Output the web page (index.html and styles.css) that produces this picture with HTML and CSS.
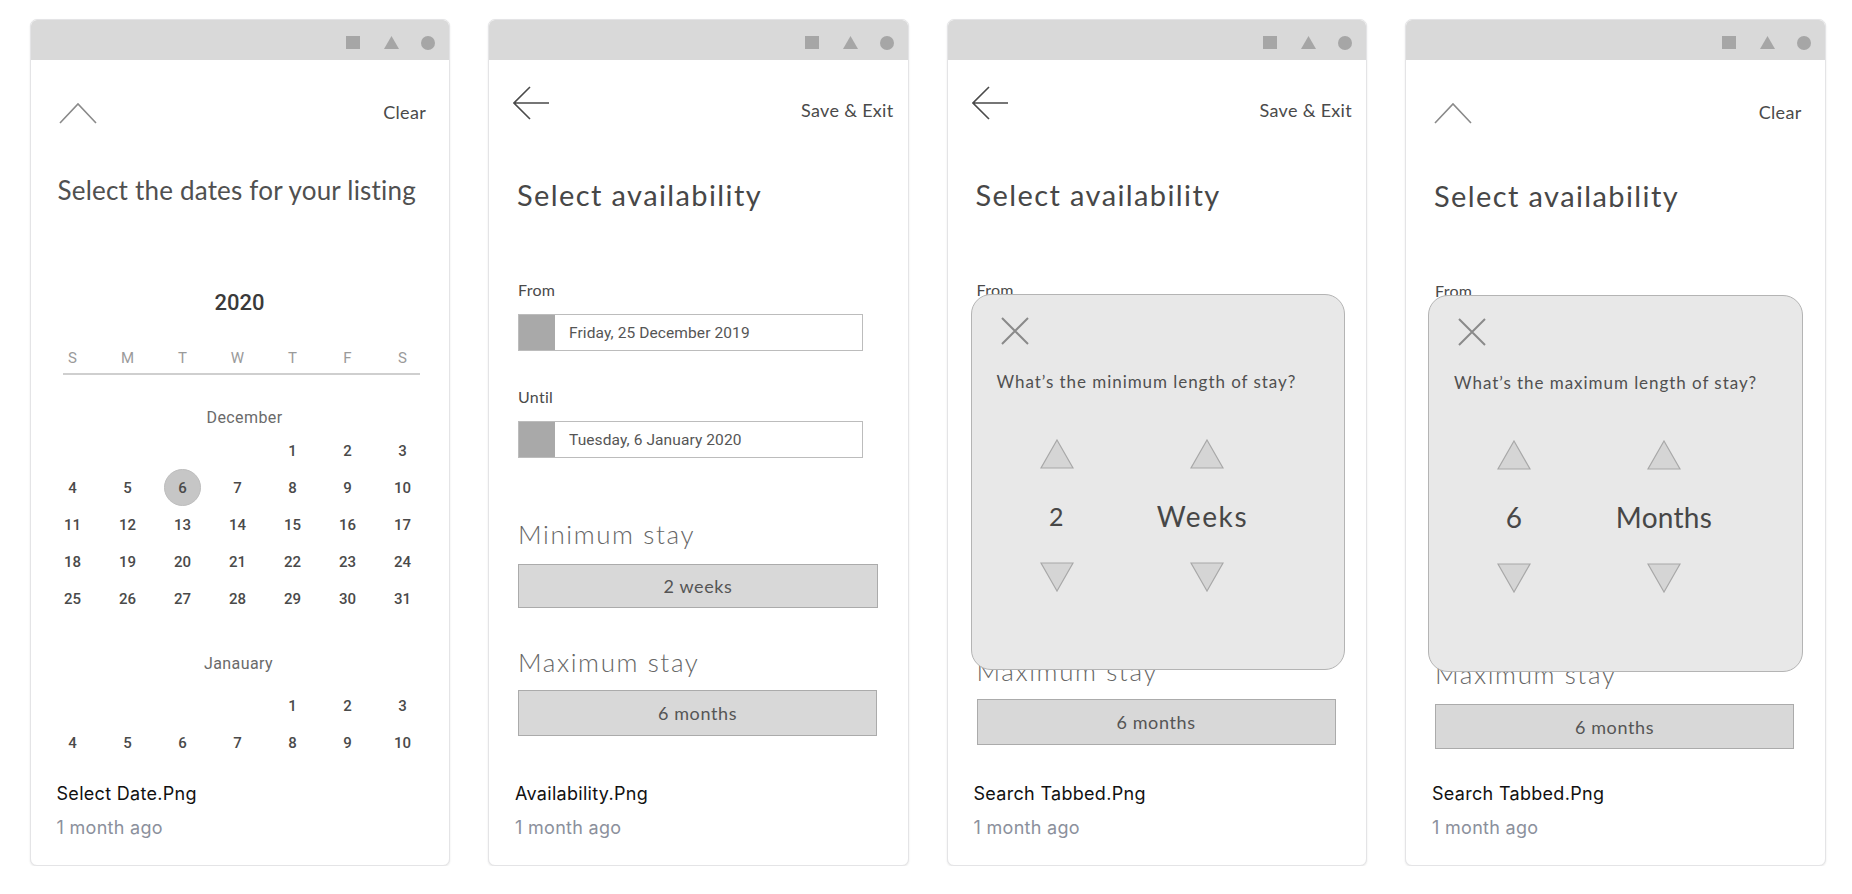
FILE: index.html
```html
<!DOCTYPE html>
<html lang="en">
<head>
<meta charset="utf-8">
<title>Files</title>
<link rel="stylesheet" href="styles.css">
</head>
<body>
<div class="grid">

  <div class="card">
    <div class="shot">
      <div class="chrome">
        <span class="ic-sq"></span>
        <svg class="ic-tri" width="15" height="13" viewBox="0 0 15 13"><polygon points="7.5,0 15,13 0,13" fill="#a6a6a6"/></svg>
        <span class="ic-dot"></span>
      </div>
      <div class="screen">
        <div class="topbar topbar-chev">
          <svg class="chev" width="38" height="22" viewBox="0 0 38 22"><polyline points="1,21 19,2 37,21" fill="none" stroke="#8a8a8a" stroke-width="1.6"/></svg>
          <span class="toplink toplink-clear">Clear</span>
        </div>
        <h1 class="title-dates">Select the dates for your listing</h1>
        <div class="cal">
          <div class="year">2020</div>
          <div class="dow"><span>S</span><span>M</span><span>T</span><span>W</span><span>T</span><span>F</span><span>S</span></div>
          <div class="dow-line"></div>
          <div class="month month-dec">December</div>
          <div class="days">
            <span></span><span></span><span></span><span></span><span>1</span><span>2</span><span>3</span>
            <span>4</span><span>5</span><span class="sel">6</span><span>7</span><span>8</span><span>9</span><span>10</span>
            <span>11</span><span>12</span><span>13</span><span>14</span><span>15</span><span>16</span><span>17</span>
            <span>18</span><span>19</span><span>20</span><span>21</span><span>22</span><span>23</span><span>24</span>
            <span>25</span><span>26</span><span>27</span><span>28</span><span>29</span><span>30</span><span>31</span>
          </div>
          <div class="month month-jan">Janauary</div>
          <div class="days days-jan">
            <span></span><span></span><span></span><span></span><span>1</span><span>2</span><span>3</span>
            <span>4</span><span>5</span><span>6</span><span>7</span><span>8</span><span>9</span><span>10</span>
          </div>
        </div>
      </div>
    </div>
    <div class="meta">
      <div class="name">Select Date.Png</div>
      <div class="time">1 month ago</div>
    </div>
  </div>

  <div class="card">
    <div class="shot">
      <div class="chrome">
        <span class="ic-sq"></span>
        <svg class="ic-tri" width="15" height="13" viewBox="0 0 15 13"><polygon points="7.5,0 15,13 0,13" fill="#a6a6a6"/></svg>
        <span class="ic-dot"></span>
      </div>
      <div class="screen">
        <div class="topbar topbar-back">
          <svg class="back" width="36" height="34" viewBox="0 0 36 34"><path d="M36 17H1M17 1L1 17L17 33" fill="none" stroke="#4a4a4a" stroke-width="1.6"/></svg>
          <span class="toplink toplink-low">Save &amp; Exit</span>
        </div>
        <h1 class="title-avail">Select availability</h1>
        <div class="label label-from">From</div>
        <div class="datebox"><span class="datebox-sq"></span><span class="datebox-text">Friday, 25 December 2019</span></div>
        <div class="label label-until">Until</div>
        <div class="datebox"><span class="datebox-sq"></span><span class="datebox-text">Tuesday, 6 January 2020</span></div>
        <div class="section section-min">Minimum stay</div>
        <div class="staybox staybox-min">2 weeks</div>
        <div class="section section-max">Maximum stay</div>
        <div class="staybox staybox-max">6 months</div>
      </div>
    </div>
    <div class="meta">
      <div class="name">Availability.Png</div>
      <div class="time">1 month ago</div>
    </div>
  </div>

  <div class="card">
    <div class="shot">
      <div class="chrome">
        <span class="ic-sq"></span>
        <svg class="ic-tri" width="15" height="13" viewBox="0 0 15 13"><polygon points="7.5,0 15,13 0,13" fill="#a6a6a6"/></svg>
        <span class="ic-dot"></span>
      </div>
      <div class="screen">
        <div class="topbar topbar-back">
          <svg class="back" width="36" height="34" viewBox="0 0 36 34"><path d="M36 17H1M17 1L1 17L17 33" fill="none" stroke="#4a4a4a" stroke-width="1.6"/></svg>
          <span class="toplink toplink-low">Save &amp; Exit</span>
        </div>
        <h1 class="title-avail">Select availability</h1>
        <div class="label label-from">From</div>
        <div class="datebox covered"><span class="datebox-sq"></span><span class="datebox-text">Friday, 25 December 2019</span></div>
        <div class="label label-until covered">Until</div>
        <div class="datebox covered"><span class="datebox-sq"></span><span class="datebox-text">Tuesday, 6 January 2020</span></div>
        <div class="section section-min covered">Minimum stay</div>
        <div class="staybox staybox-min covered">2 weeks</div>
        <div class="section section-max shifted">Maximum stay</div>
        <div class="staybox staybox-max">6 months</div>
      </div>
      <div class="modal modal-a">
        <svg class="close" width="28" height="28" viewBox="0 0 28 28"><path d="M1 1L27 27M27 1L1 27" stroke="#8a8a8a" stroke-width="2" fill="none"/></svg>
        <p class="question">What’s the minimum length of stay?</p>
        <div class="pickers">
          <div class="picker">
            <svg class="tri" width="34" height="30" viewBox="0 0 34 30"><polygon points="17,1 33,29 1,29" fill="#d5d5d5" stroke="#a8a8a8" stroke-width="1.2"/></svg>
            <div class="pick-val pick-num">2</div>
            <svg class="tri" width="34" height="30" viewBox="0 0 34 30"><polygon points="1,1 33,1 17,29" fill="#d5d5d5" stroke="#a8a8a8" stroke-width="1.2"/></svg>
          </div>
          <div class="picker">
            <svg class="tri" width="34" height="30" viewBox="0 0 34 30"><polygon points="17,1 33,29 1,29" fill="#d5d5d5" stroke="#a8a8a8" stroke-width="1.2"/></svg>
            <div class="pick-val pick-weeks">Weeks</div>
            <svg class="tri" width="34" height="30" viewBox="0 0 34 30"><polygon points="1,1 33,1 17,29" fill="#d5d5d5" stroke="#a8a8a8" stroke-width="1.2"/></svg>
          </div>
        </div>
      </div>
    </div>
    <div class="meta">
      <div class="name">Search Tabbed.Png</div>
      <div class="time">1 month ago</div>
    </div>
  </div>

  <div class="card">
    <div class="shot">
      <div class="chrome">
        <span class="ic-sq"></span>
        <svg class="ic-tri" width="15" height="13" viewBox="0 0 15 13"><polygon points="7.5,0 15,13 0,13" fill="#a6a6a6"/></svg>
        <span class="ic-dot"></span>
      </div>
      <div class="screen">
        <div class="topbar topbar-chev">
          <svg class="chev" width="38" height="22" viewBox="0 0 38 22"><polyline points="1,21 19,2 37,21" fill="none" stroke="#8a8a8a" stroke-width="1.6"/></svg>
          <span class="toplink toplink-clear">Clear</span>
        </div>
        <h1 class="title-avail title-avail-b">Select availability</h1>
        <div class="label label-from">From</div>
        <div class="datebox covered"><span class="datebox-sq"></span><span class="datebox-text">Friday, 25 December 2019</span></div>
        <div class="label label-until covered">Until</div>
        <div class="datebox covered"><span class="datebox-sq"></span><span class="datebox-text">Tuesday, 6 January 2020</span></div>
        <div class="section section-min covered">Minimum stay</div>
        <div class="staybox staybox-min covered">2 weeks</div>
        <div class="section section-max shifted-b">Maximum stay</div>
        <div class="staybox staybox-max staybox-max-b">6 months</div>
      </div>
      <div class="modal modal-b">
        <svg class="close" width="28" height="28" viewBox="0 0 28 28"><path d="M1 1L27 27M27 1L1 27" stroke="#8a8a8a" stroke-width="2" fill="none"/></svg>
        <p class="question">What’s the maximum length of stay?</p>
        <div class="pickers">
          <div class="picker">
            <svg class="tri" width="34" height="30" viewBox="0 0 34 30"><polygon points="17,1 33,29 1,29" fill="#d5d5d5" stroke="#a8a8a8" stroke-width="1.2"/></svg>
            <div class="pick-val">6</div>
            <svg class="tri" width="34" height="30" viewBox="0 0 34 30"><polygon points="1,1 33,1 17,29" fill="#d5d5d5" stroke="#a8a8a8" stroke-width="1.2"/></svg>
          </div>
          <div class="picker">
            <svg class="tri" width="34" height="30" viewBox="0 0 34 30"><polygon points="17,1 33,29 1,29" fill="#d5d5d5" stroke="#a8a8a8" stroke-width="1.2"/></svg>
            <div class="pick-val">Months</div>
            <svg class="tri" width="34" height="30" viewBox="0 0 34 30"><polygon points="1,1 33,1 17,29" fill="#d5d5d5" stroke="#a8a8a8" stroke-width="1.2"/></svg>
          </div>
        </div>
      </div>
    </div>
    <div class="meta">
      <div class="name">Search Tabbed.Png</div>
      <div class="time">1 month ago</div>
    </div>
  </div>

</div>
</body>
</html>
```

FILE: styles.css
```css
* { box-sizing: border-box; }

html, body {
  margin: 0;
  padding: 0;
  background: #ffffff;
}

body {
  font-family: Inter, "Noto Sans", sans-serif;
}

.grid {
  display: flex;
  gap: 38px;
  padding: 19px 0 0 29.5px;
}

.card {
  width: 420.5px;
  height: 847px;
  flex: none;
  display: flex;
  flex-direction: column;
  background: #fff;
  border: 1px solid #e4e4e6;
  border-radius: 7px;
  box-shadow: 0 1px 2px rgba(0, 0, 0, 0.10);
  overflow: hidden;
}

.shot {
  position: relative;
  height: 731px;
  flex: none;
  overflow: hidden;
  background: #fff;
}

/* phone chrome */
.chrome {
  height: 40px;
  background: #d9d9d9;
  display: flex;
  justify-content: flex-end;
  align-items: flex-start;
  padding: 16px 14px 0 0;
}

.ic-sq {
  width: 14px;
  height: 13px;
  background: #a6a6a6;
}

.ic-tri {
  display: block;
  margin-left: 24px;
}

.ic-dot {
  width: 14px;
  height: 14px;
  border-radius: 50%;
  background: #a6a6a6;
  margin-left: 22px;
}

/* mockup screen */
.screen {
  font-family: Lato, "Open Sans", sans-serif;
  color: #474747;
}

.covered {
  visibility: hidden;
}

.topbar {
  display: flex;
  justify-content: space-between;
  align-items: flex-start;
}

.topbar-chev {
  margin-top: 42px;
  padding: 0 23px 0 28px;
  height: 22px;
}

.topbar-back {
  margin-top: 26px;
  padding: 0 14px 0 24px;
  height: 37px;
}

.chev, .back {
  display: block;
}

.toplink {
  font-size: 18px;
  line-height: 20px;
  color: #4a4a4a;
  letter-spacing: 0.3px;
}

.toplink-clear {
  margin-top: 0;
}

.toplink-low {
  margin-top: 14px;
}

.title-dates {
  margin: 50px 0 0 27px;
  font-size: 26px;
  line-height: 32px;
  font-weight: 400;
  color: #505050;
  letter-spacing: 0.2px;
}

/* calendar */
.cal {
  font-family: Roboto, "Liberation Sans", sans-serif;
  padding: 0 0 0 14.5px;
  width: 402px;
}

.year {
  margin-top: 83px;
  text-align: center;
  font-size: 22px;
  line-height: 28px;
  font-weight: 500;
  color: #3a3a3a;
  width: 385px;
  padding-left: 4px;
}

.dow {
  margin-top: 31px;
  display: grid;
  grid-template-columns: repeat(7, 55px);
  font-size: 15px;
  line-height: 20px;
  color: #9a9a9a;
  text-align: center;
}

.dow-line {
  margin: 5px 13px 0 18px;
  height: 2px;
  background: #cfcfcf;
}

.month {
  text-align: center;
  font-size: 16px;
  line-height: 20px;
  color: #6a6a6a;
  width: 385px;
  letter-spacing: 0.4px;
}

.month-dec {
  margin-top: 33px;
  padding-left: 14px;
}

.month-jan {
  margin-top: 37px;
  padding-left: 2px;
}

.days {
  margin-top: 4px;
  display: grid;
  grid-template-columns: repeat(7, 55px);
  grid-auto-rows: 37px;
  font-size: 15px;
  font-weight: 500;
  color: #4a4a4a;
  text-align: center;
}

.days span {
  display: flex;
  align-items: center;
  justify-content: center;
}

.days .sel {
  width: 37px;
  height: 37px;
  margin: 0 auto;
  border-radius: 50%;
  background: #c6c6c6;
  border: 1px solid #bdbdbd;
}

.days-jan {
  margin-top: 13px;
}

/* availability */
.title-avail {
  margin: 55px 0 0 28px;
  font-size: 29px;
  line-height: 34px;
  font-weight: 400;
  color: #474747;
  letter-spacing: 1.4px;
}

.title-avail-b {
  margin-top: 55px;
  margin-left: 28px;
}

.label {
  margin-left: 29px;
  font-size: 16px;
  line-height: 20px;
  color: #4a4a4a;
  letter-spacing: 0.3px;
}

.label-from {
  margin-top: 68px;
}

.label-until {
  margin-top: 36px;
}

.datebox {
  margin: 14px 0 0 29px;
  width: 345px;
  height: 37px;
  display: flex;
  align-items: center;
  border: 1.5px solid #bcbcbc;
  background: #fff;
}

.datebox-sq {
  width: 36px;
  height: 100%;
  background: #a9a9a9;
  flex: none;
}

.datebox-text {
  font-family: Roboto, "Liberation Sans", sans-serif;
  font-size: 15.5px;
  color: #555;
  margin-left: 14px;
  letter-spacing: 0.1px;
}

.section {
  margin-left: 29px;
  font-size: 26px;
  line-height: 32px;
  font-weight: 300;
  color: #666;
  letter-spacing: 1.6px;
}

.section-min {
  margin-top: 60px;
}

.section-max {
  margin-top: 38px;
}

.shifted {
  margin-top: 47px;
}

.shifted-b {
  margin-top: 49px;
}

.staybox {
  margin: 14px 0 0 29px;
  width: 360px;
  height: 44px;
  display: flex;
  align-items: center;
  justify-content: center;
  background: #d8d8d8;
  border: 1.5px solid #ababab;
  font-size: 18px;
  color: #555;
  letter-spacing: 0.6px;
}

.staybox-max {
  margin-top: 12px;
  height: 46px;
  width: 359px;
}

.staybox-max-b {
  margin-top: 14px;
  height: 45px;
}

/* modal overlay */
.modal {
  position: absolute;
  background: #e8e8e8;
  border: 1.5px solid #b4b4b4;
  border-radius: 20px;
  font-family: Lato, "Open Sans", sans-serif;
  color: #4a4a4a;
  padding: 22px 0 0 0;
}

.modal-a {
  top: 274px;
  left: 23px;
  width: 374px;
  height: 376px;
}

.modal-b {
  top: 275px;
  left: 22px;
  width: 375px;
  height: 377px;
}

.close {
  display: block;
  margin-left: 29px;
}

.question {
  margin: 26px 0 0 25px;
  font-size: 17px;
  line-height: 22px;
  color: #505050;
  letter-spacing: 0.95px;
}

.pickers {
  display: flex;
  margin-top: 46px;
  padding-left: 35px;
  gap: 50px;
}

.picker {
  width: 100px;
  display: flex;
  flex-direction: column;
  align-items: center;
}

.tri {
  display: block;
}

.pick-val {
  height: 93px;
  display: flex;
  align-items: center;
  justify-content: center;
  font-size: 28px;
  line-height: 34px;
  color: #474747;
  white-space: nowrap;
  letter-spacing: 0.3px;
}

.pick-num {
  font-size: 25px;
}

.pick-weeks {
  letter-spacing: 1.6px;
  margin-right: 8px;
}

/* caption */
.meta {
  padding: 31px 0 0 26px;
}

.name {
  font-size: 18px;
  line-height: 24px;
  color: #111;
  letter-spacing: 0.3px;
}

.time {
  margin-top: 10px;
  font-size: 18px;
  line-height: 24px;
  color: #8b909c;
  letter-spacing: 0.3px;
}
```
